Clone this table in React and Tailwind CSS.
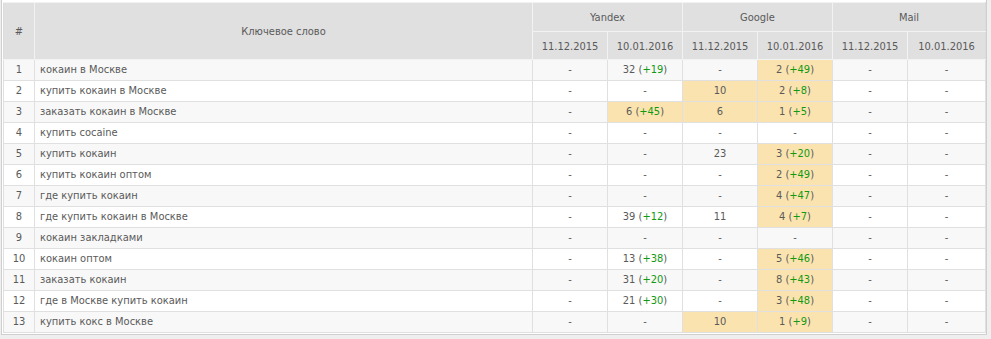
import React from "react";

const rows = [
  ["кокаин в Москве", ["-", null, false], ["32", "+19", false], ["-", null, false], ["2", "+49", true]],
  ["купить кокаин в Москве", ["-", null, false], ["-", null, false], ["10", null, true], ["2", "+8", true]],
  ["заказать кокаин в Москве", ["-", null, false], ["6", "+45", true], ["6", null, true], ["1", "+5", true]],
  ["купить cocaine", ["-", null, false], ["-", null, false], ["-", null, false], ["-", null, false]],
  ["купить кокаин", ["-", null, false], ["-", null, false], ["23", null, false], ["3", "+20", true]],
  ["купить кокаин оптом", ["-", null, false], ["-", null, false], ["-", null, false], ["2", "+49", true]],
  ["где купить кокаин", ["-", null, false], ["-", null, false], ["-", null, false], ["4", "+47", true]],
  ["где купить кокаин в Москве", ["-", null, false], ["39", "+12", false], ["11", null, false], ["4", "+7", true]],
  ["кокаин закладками", ["-", null, false], ["-", null, false], ["-", null, false], ["-", null, false]],
  ["кокаин оптом", ["-", null, false], ["13", "+38", false], ["-", null, false], ["5", "+46", true]],
  ["заказать кокаин", ["-", null, false], ["31", "+20", false], ["-", null, false], ["8", "+43", true]],
  ["где в Москве купить кокаин", ["-", null, false], ["21", "+30", false], ["-", null, false], ["3", "+48", true]],
  ["купить кокс в Москве", ["-", null, false], ["-", null, false], ["10", null, true], ["1", "+9", true]],
];

const font = { fontFamily: "'DejaVu Sans Condensed', 'Liberation Sans', sans-serif" };

function Cell({ value, delta, hot }) {
  return (
    <td className={`border border-[#e0e0e0] text-center ${hot ? "bg-[#fbe3b0]" : ""}`}>
      {value}
      {delta && (
        <>
          {" "}(<span className="text-[#119a11]">{delta}</span>)
        </>
      )}
    </td>
  );
}

export default function App() {
  const th = "border border-[#f2f2f2] bg-[#e0e0e0] font-normal pt-[3px]";
  return (
    <div className="w-[991px] h-[339px] bg-[#efefef] overflow-hidden pl-px" style={font}>
      <div className="w-[986px] bg-white border-l border-r border-b border-[#cfcfcf] pt-[2px] pb-px pl-px pr-px">
        <table className="border-collapse table-fixed w-[982px] text-[11px] text-[#5a5a5a]">
          <colgroup>
            <col className="w-[31px]" />
            <col className="w-[498px]" />
            <col className="w-[75px]" />
            <col className="w-[75px]" />
            <col className="w-[75px]" />
            <col className="w-[75px]" />
            <col className="w-[75px]" />
            <col className="w-[78px]" />
          </colgroup>
          <thead>
            <tr className="h-[29px]">
              <th rowSpan={2} className={`${th} border-l-[#dcdcdc]`}>#</th>
              <th rowSpan={2} className={th}>Ключевое слово</th>
              <th colSpan={2} className={th}>Yandex</th>
              <th colSpan={2} className={th}>Google</th>
              <th colSpan={2} className={`${th} border-r-[#dcdcdc]`}>Mail</th>
            </tr>
            <tr className="h-[28px]">
              <th className={th}>11.12.2015</th>
              <th className={th}>10.01.2016</th>
              <th className={th}>11.12.2015</th>
              <th className={th}>10.01.2016</th>
              <th className={th}>11.12.2015</th>
              <th className={`${th} border-r-[#dcdcdc]`}>10.01.2016</th>
            </tr>
          </thead>
          <tbody>
            {rows.map((r, i) => (
              <tr key={i} className={`h-[21px] ${i % 2 === 0 ? "bg-[#f8f8f8]" : "bg-white"}`}>
                <td className="border border-[#e0e0e0] text-center">{i + 1}</td>
                <td className="border border-[#e0e0e0] pl-[5px]">{r[0]}</td>
                {r.slice(1).map((c, j) => (
                  <Cell key={j} value={c[0]} delta={c[1]} hot={c[2]} />
                ))}
                <td className="border border-[#e0e0e0] text-center">-</td>
                <td className="border border-[#e0e0e0] text-center">-</td>
              </tr>
            ))}
          </tbody>
        </table>
      </div>
    </div>
  );
}
